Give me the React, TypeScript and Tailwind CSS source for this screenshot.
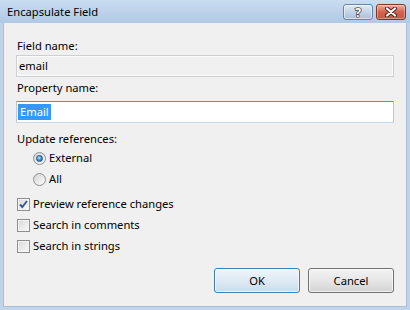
import React from "react";

function Radio({ checked }: { checked?: boolean }) {
  return (
    <span className="relative flex w-[13px] h-[13px] items-center justify-center rounded-full border border-[#8e8f8f] bg-gradient-to-br from-[#d4d4d4] to-[#fbfbfb]">
      {checked && (
        <span className="w-[7px] h-[7px] rounded-full border border-[#1f4f7e] bg-[radial-gradient(circle_at_40%_35%,#c3e8fb_0%,#4b9bd3_45%,#1d5d96_100%)]" />
      )}
    </span>
  );
}

function Check({ checked }: { checked?: boolean }) {
  return (
    <span className="relative flex w-[13px] h-[13px] items-center justify-center border border-[#8e8f8f] bg-gradient-to-br from-[#d9d9d9] to-[#fafafa] shadow-[inset_0_0_0_1px_#f4f4f4]">
      {checked && (
        <svg width="11" height="11" viewBox="0 0 11 11" className="absolute left-[0px] top-[0px]">
          <path d="M2 5.5 L4.3 8 L9 2" fill="none" stroke="#3a5495" strokeWidth="1.9" strokeLinejoin="miter" />
        </svg>
      )}
    </span>
  );
}

export default function App() {
  return (
    <div className="w-[410px] h-[310px] flex flex-col bg-[#bfd3ea] overflow-hidden font-['Noto_Sans',sans-serif] text-[11.2px] text-black">
      {/* title bar */}
      <div className="h-[23px] flex items-start bg-gradient-to-b from-[#c9dcf0] to-[#b1c9e5]">
        <span className="ml-[7px] mt-[4px] leading-[16px] text-[11.2px] text-black">Encapsulate Field</span>
        <div className="ml-auto mr-[4px] mt-[4px] flex gap-[3px]">
          <div className="w-[30px] h-[16px] rounded-[3px] border border-[#6b84a3] bg-gradient-to-b from-[#e1eaf5] via-[#c3d4e8] to-[#a9c0dc] flex items-center justify-center shadow-[inset_0_0_0_1px_rgba(255,255,255,0.5)]">
            <svg width="12" height="14" viewBox="0 0 12 14">
              <text x="6" y="11.5" textAnchor="middle" fontFamily="'Noto Sans', sans-serif" fontWeight="bold" fontSize="12" fill="#ffffff" stroke="#3f4e63" strokeWidth="1.6" paintOrder="stroke">?</text>
            </svg>
          </div>
          <div className="w-[30px] h-[16px] rounded-[3px] border border-[#7f3526] bg-gradient-to-b from-[#eab0a2] via-[#d2604a] to-[#c85a42] flex items-center justify-center shadow-[inset_0_0_0_1px_rgba(255,255,255,0.35)]">
            <svg width="14" height="10" viewBox="0 0 14 10">
              <path d="M3 1.5 L11 8.5 M11 1.5 L3 8.5" stroke="#4a2018" strokeWidth="4" strokeLinecap="round" />
              <path d="M3 1.5 L11 8.5 M11 1.5 L3 8.5" stroke="#ffffff" strokeWidth="2.2" strokeLinecap="round" />
            </svg>
          </div>
        </div>
      </div>

      {/* content */}
      <div className="flex-1 mx-[3px] mb-[3px] border-x border-b border-[#a9bfd7] bg-[#f0f0f0] px-[12px] pt-[15px] flex flex-col">
        <div className="h-[16px] leading-[16px] pl-px">Field name:</div>
        <div className="mt-px h-[22px] flex items-center border border-[#cdd0d3] shadow-[inset_0_0_0_1px_#fbfbfb] pl-[2px] leading-[16px]">
          email
        </div>
        <div className="mt-[3px] h-[16px] leading-[16px] pl-px">Property name:</div>
        <div className="mt-[5px] h-[22px] flex items-center bg-white border border-[#b5cbe2] border-t-[#6a8db1] border-b-[#c6d9ec] pl-px">
          <span className="bg-[#3399ff] text-white leading-[16px] px-[2px]">Email</span>
        </div>
        <div className="mt-[8px] h-[16px] leading-[16px] pl-px">Update references:</div>
        <div className="mt-[3px] h-[16px] flex items-center gap-[3px] ml-[17px]">
          <Radio checked />
          <span className="leading-[16px]">External</span>
        </div>
        <div className="mt-[5px] h-[16px] flex items-center gap-[3px] ml-[17px]">
          <Radio />
          <span className="leading-[16px]">All</span>
        </div>
        <div className="mt-[9px] h-[16px] flex items-center gap-[3px] ml-px">
          <Check checked />
          <span className="leading-[16px]">Preview reference changes</span>
        </div>
        <div className="mt-[5px] h-[16px] flex items-center gap-[3px] ml-px">
          <Check />
          <span className="leading-[16px]">Search in comments</span>
        </div>
        <div className="mt-[5px] h-[16px] flex items-center gap-[3px] ml-px">
          <Check />
          <span className="leading-[16px]">Search in strings</span>
        </div>
        <div className="mt-[14px] flex justify-end gap-[8px]">
          <button className="w-[86px] h-[25px] rounded-[3px] border border-[#3c7fb1] bg-gradient-to-b from-[#eef5fb] via-[#dfeaf4] to-[#cadcea] shadow-[inset_0_0_0_1px_rgba(255,255,255,0.7)] leading-[16px] text-black">
            OK
          </button>
          <button className="w-[86px] h-[25px] rounded-[3px] border border-[#707070] bg-gradient-to-b from-[#f3f3f3] via-[#e6e6e6] to-[#d3d3d3] shadow-[inset_0_0_0_1px_rgba(255,255,255,0.7)] leading-[16px] text-black">
            Cancel
          </button>
        </div>
      </div>
    </div>
  );
}
